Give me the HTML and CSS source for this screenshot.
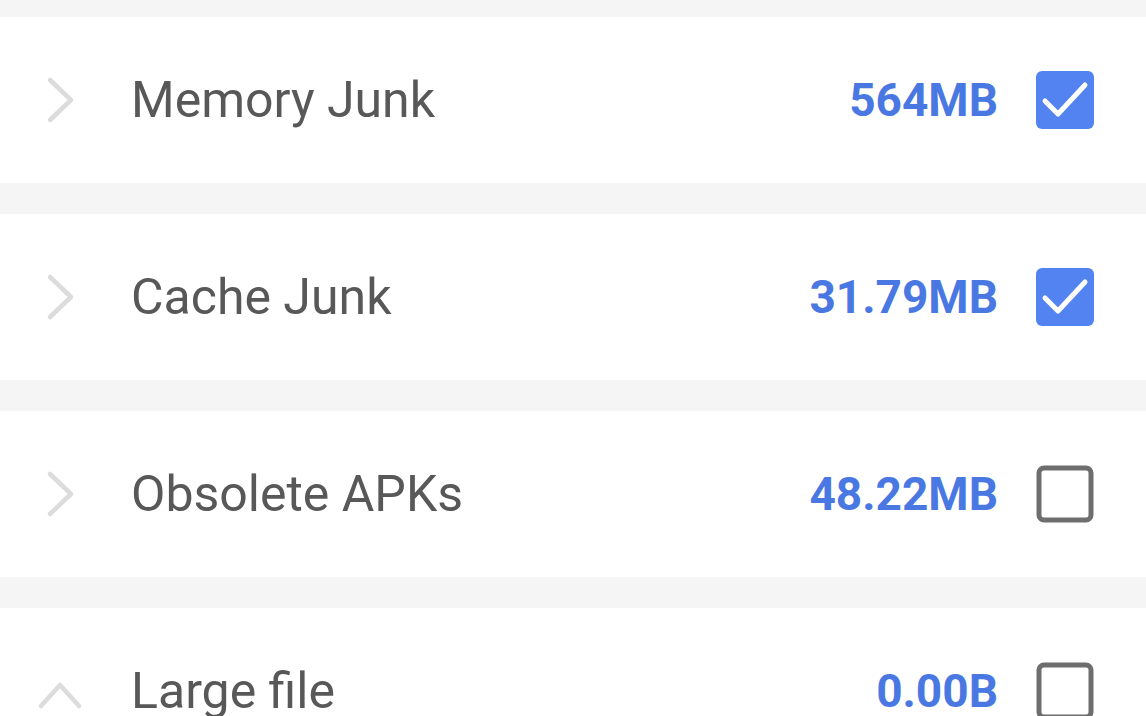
FILE: index.html
```html
<!DOCTYPE html>
<html>
<head>
<meta charset="utf-8">
<link rel="stylesheet" href="styles.css">
</head>
<body>
<div class="list">
  <div class="item">
    <span class="slot"><svg class="chev" viewBox="0 0 30 48"><path d="M4 4 L25 24 L4 44"/></svg></span>
    <span class="name">Memory Junk</span>
    <span class="size">564MB</span>
    <svg class="box on" viewBox="0 0 58 58"><rect x="0" y="0" width="58" height="58" rx="6"/><path d="M9 30 L22 43 L49 14"/></svg>
  </div>
  <div class="item">
    <span class="slot"><svg class="chev" viewBox="0 0 30 48"><path d="M4 4 L25 24 L4 44"/></svg></span>
    <span class="name">Cache Junk</span>
    <span class="size">31.79MB</span>
    <svg class="box on" viewBox="0 0 58 58"><rect x="0" y="0" width="58" height="58" rx="6"/><path d="M9 30 L22 43 L49 14"/></svg>
  </div>
  <div class="item">
    <span class="slot"><svg class="chev" viewBox="0 0 30 48"><path d="M4 4 L25 24 L4 44"/></svg></span>
    <span class="name">Obsolete APKs</span>
    <span class="size">48.22MB</span>
    <svg class="box off" viewBox="0 0 58 58"><rect x="3" y="3" width="52" height="52" rx="5"/></svg>
  </div>
  <div class="item">
    <span class="slot"><svg class="chev up" viewBox="0 0 46 30"><path d="M4 26 L23 5 L42 26"/></svg></span>
    <span class="name">Large file</span>
    <span class="size">0.00B</span>
    <svg class="box off" viewBox="0 0 58 58"><rect x="3" y="3" width="52" height="52" rx="5"/></svg>
  </div>
</div>
</body>
</html>
```

FILE: styles.css
```css
html, body {
  margin: 0;
  padding: 0;
  background: #f5f5f5;
  overflow: hidden;
}
.list {
  display: flex;
  flex-direction: column;
  gap: 31px;
  padding-top: 17px;
}
.item {
  height: 166px;
  background: #ffffff;
  display: flex;
  align-items: center;
  padding: 0 52px 0 37px;
  font-family: Roboto, "Liberation Sans", sans-serif;
}
.slot {
  width: 46px;
  flex: none;
  display: flex;
  align-items: center;
}
.chev {
  width: 30px;
  height: 48px;
  margin-left: 9px;
  fill: none;
  stroke: #dcdcdc;
  stroke-width: 4.5;
  stroke-linecap: round;
  stroke-linejoin: round;
}
.chev.up {
  width: 46px;
  height: 30px;
  margin-left: 0;
  margin-top: 8px;
}
.name {
  margin-left: 48px;
  font-size: 50px;
  color: #585858;
  flex: 1;
  line-height: 1;
}
.size {
  font-size: 46px;
  font-weight: 700;
  color: #4a78e2;
  line-height: 1;
  margin-right: 38px;
}
.box {
  width: 58px;
  height: 58px;
  flex: none;
}
.box.on rect {
  fill: #5383f0;
}
.box.on path {
  fill: none;
  stroke: #ffffff;
  stroke-width: 5;
  stroke-linecap: round;
  stroke-linejoin: round;
}
.box.off rect {
  fill: #ffffff;
  stroke: #6e6e6e;
  stroke-width: 5;
}
```
